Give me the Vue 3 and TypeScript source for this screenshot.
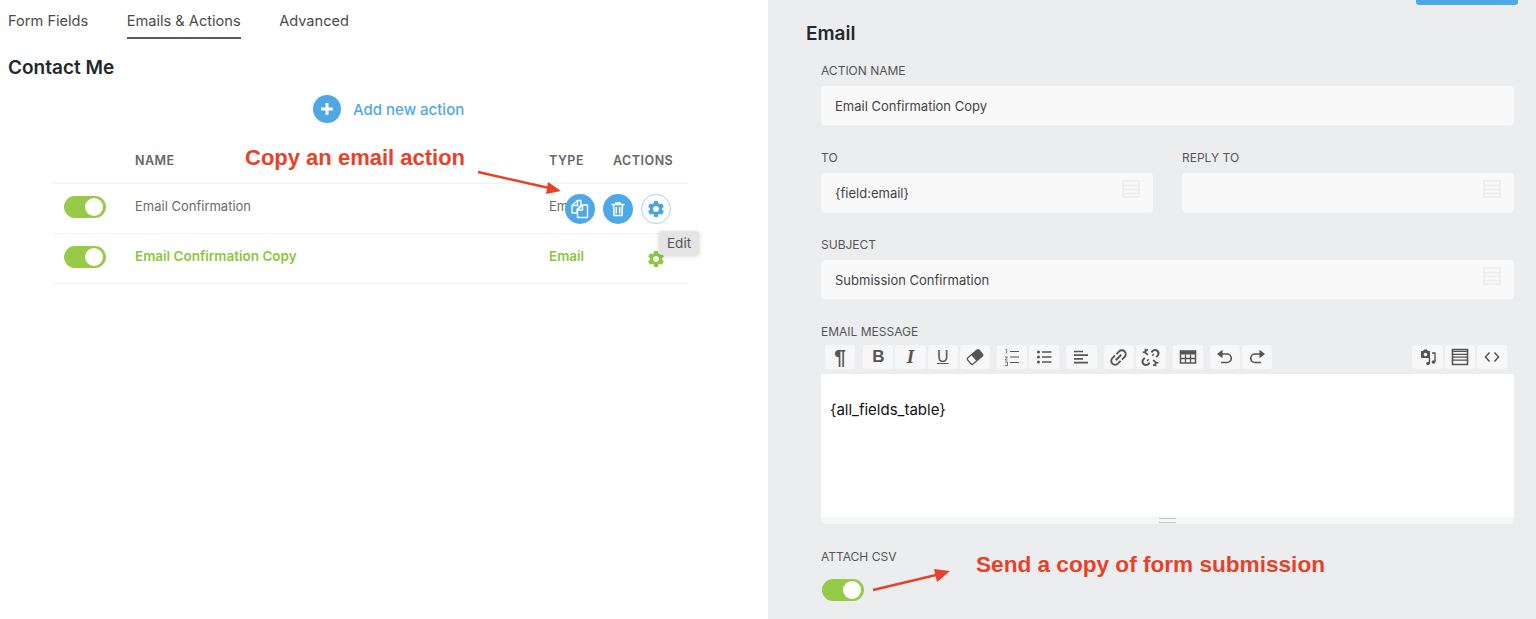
<script setup lang="ts">
const tabs = ['Form Fields', 'Emails & Actions', 'Advanced']
const gear =
  'M19.14 12.94c.04-.3.06-.61.06-.94 0-.32-.02-.64-.07-.94l2.03-1.58a.49.49 0 0 0 .12-.61l-1.92-3.32a.488.488 0 0 0-.59-.22l-2.39.96c-.5-.38-1.03-.7-1.62-.94l-.36-2.54a.484.484 0 0 0-.48-.41h-3.84c-.24 0-.43.17-.47.41l-.36 2.54c-.59.24-1.13.57-1.62.94l-2.39-.96c-.22-.08-.47 0-.59.22L2.74 8.87c-.12.21-.08.47.12.61l2.03 1.58c-.05.3-.09.63-.09.94s.02.64.07.94l-2.03 1.58a.49.49 0 0 0-.12.61l1.92 3.32c.12.22.37.29.59.22l2.39-.96c.5.38 1.03.7 1.62.94l.36 2.54c.05.24.24.41.48.41h3.84c.24 0 .44-.17.47-.41l.36-2.54c.59-.24 1.13-.56 1.62-.94l2.39.96c.22.08.47 0 .59-.22l1.92-3.32c.12-.22.07-.47-.12-.61l-2.01-1.58zM12 15.6c-1.98 0-3.6-1.62-3.6-3.6s1.62-3.6 3.6-3.6 3.6 1.62 3.6 3.6-1.62 3.6-3.6 3.6z'
const link =
  'M3.9 12c0-1.71 1.39-3.1 3.1-3.1h4V7H7c-2.76 0-5 2.24-5 5s2.24 5 5 5h4v-1.9H7c-1.71 0-3.1-1.39-3.1-3.1zM8 13h8v-2H8v2zm9-6h-4v1.9h4c1.71 0 3.1 1.39 3.1 3.1s-1.39 3.1-3.1 3.1h-4V17h4c2.76 0 5-2.24 5-5s-2.24-5-5-5z'
</script>

<template>
  <div class="page">
    <!-- Left pane: actions list -->
    <section class="left">
      <nav class="tabs">
        <a v-for="(t, i) in tabs" :key="t" class="tab" :class="{ active: i === 1 }">{{ t }}</a>
      </nav>
      <h2 class="form-title">Contact Me</h2>
      <div class="add-row">
        <span class="add-circle">
          <svg width="12" height="12" viewBox="0 0 12 12"><path d="M6 1v10M1 6h10" stroke="#fff" stroke-width="3" stroke-linecap="round" /></svg>
        </span>
        <span class="add-text">Add new action</span>
      </div>

      <div class="table">
        <div class="tr head">
          <span></span>
          <span>NAME</span>
          <span>TYPE</span>
          <span>ACTIONS</span>
        </div>
        <div class="tr">
          <span class="toggle"><i></i></span>
          <span class="name">Email Confirmation</span>
          <span class="name">Email</span>
          <span></span>
          <div class="hover-actions">
            <span class="round solid">
              <svg width="24" height="24" viewBox="0 0 24 24" fill="none" stroke="#fff" stroke-width="1.4" stroke-linejoin="round">
                <path d="M9.500 3.500h3.500v4.500L9 12.500v3.500H4V8.500z" />
                <path d="M9.500 3.500v5h-5" />
                <path d="M14.500 8h5v12.500H9.500V13z" />
                <path d="M14.500 8v5h-5" />
              </svg>
            </span>
            <span class="round solid">
              <svg width="18" height="18" viewBox="0 0 18 18" fill="none" stroke="#fff" stroke-width="1.600" stroke-linecap="round">
                <path d="M3 4.500h12M7 4.500V2.800h4v1.700M4.500 4.500l.6 11h7.800l.6-11M7.300 7.500v5.500M10.700 7.500v5.500" />
              </svg>
            </span>
            <span class="round outline">
              <svg width="20" height="20" viewBox="0 0 24 24"><path :d="gear" fill="#4aa5e4" /></svg>
            </span>
          </div>
        </div>
        <div class="tr copy">
          <span class="toggle"><i></i></span>
          <span class="name">Email Confirmation Copy</span>
          <span class="name">Email</span>
          <span class="gear-cell">
            <svg width="20" height="20" viewBox="0 0 24 24"><path :d="gear" fill="#8cc63f" /></svg>
          </span>
          <span class="tooltip">Edit</span>
        </div>
      </div>

      <span class="note note-copy">Copy an email action</span>
      <svg class="arrow arrow-copy" width="90" height="26" viewBox="0 0 90 26">
        <path d="M1 2L72 18" stroke="#e8412a" stroke-width="2.500" />
        <path d="M84 21L69 24L71 12z" fill="#e8412a" />
      </svg>
    </section>

    <!-- Right pane: email action form -->
    <section class="right">
      <div class="save-btn"></div>
      <h2 class="panel-title">Email</h2>
      <div class="fields">
        <div class="field">
          <label>ACTION NAME</label>
          <div class="input">Email Confirmation Copy</div>
        </div>
        <div class="two">
          <div class="field">
            <label>TO</label>
            <div class="input">
              {field:email}
              <svg class="merge" width="18" height="18" viewBox="0 0 18 18"><path d="M1 1h16v16H1zM1 5.500h16M1 9.500h16M1 13.500h16" fill="none" stroke="#ececec" stroke-width="1.500" /></svg>
            </div>
          </div>
          <div class="field">
            <label>REPLY TO</label>
            <div class="input">
              <svg class="merge" width="18" height="18" viewBox="0 0 18 18"><path d="M1 1h16v16H1zM1 5.500h16M1 9.500h16M1 13.500h16" fill="none" stroke="#ececec" stroke-width="1.500" /></svg>
            </div>
          </div>
        </div>
        <div class="field">
          <label>SUBJECT</label>
          <div class="input">
            Submission Confirmation
            <svg class="merge" width="18" height="18" viewBox="0 0 18 18"><path d="M1 1h16v16H1zM1 5.500h16M1 9.500h16M1 13.500h16" fill="none" stroke="#ececec" stroke-width="1.500" /></svg>
          </div>
        </div>
        <div class="field">
          <label class="editor-label">EMAIL MESSAGE</label>
          <div class="toolbar">
            <span class="tb para">¶</span>
            <span class="tb gap first b">B</span>
            <span class="tb i">I</span>
            <span class="tb u">U</span>
            <span class="tb">
              <svg width="18" height="18" viewBox="0 0 18 18"><g transform="rotate(-40 9 9)"><rect x="1.500" y="5" width="15" height="8" rx="1.500" fill="none" stroke="#555" stroke-width="1.300" /><path d="M7.500 5H15A1.500 1.500 0 0 1 16.500 6.500V11.500A1.500 1.500 0 0 1 15 13H7.500z" fill="#555" /></g></svg>
            </span>
            <span class="tb gap">
              <svg width="18" height="18" viewBox="0 0 18 18"><path d="M7 3.500h9M7 9h9M7 14.500h9" stroke="#555" stroke-width="1.200" /><path d="M2.500 1.500h1.200v4M2 9h2.500L2 12h2.600M2 14h2.500v3.500H2" fill="none" stroke="#555" stroke-width=".8" /></svg>
            </span>
            <span class="tb">
              <svg width="18" height="18" viewBox="0 0 18 18"><circle cx="3.500" cy="4" r="1.500" fill="#555" /><circle cx="3.500" cy="9" r="1.500" fill="#555" /><circle cx="3.500" cy="14" r="1.500" fill="#555" /><path d="M7 4h9.500M7 9h9.500M7 14h9.500" stroke="#555" stroke-width="1.400" /></svg>
            </span>
            <span class="tb gap">
              <svg width="18" height="18" viewBox="0 0 18 18"><path d="M2 3.500h9M2 7.200h14M2 10.900h9M2 14.600h14" stroke="#555" stroke-width="1.700" /></svg>
            </span>
            <span class="tb gap">
              <svg width="23" height="23" viewBox="0 0 24 24"><path :d="link" fill="#555" transform="rotate(-45 12 12)" /></svg>
            </span>
            <span class="tb">
              <svg width="21" height="21" viewBox="0 0 24 24" fill="none" stroke="#555" stroke-width="2.200">
                <path d="M13 6l2-2a4 4 0 0 1 5.500 5.500l-2 2M11 18l-2 2a4 4 0 0 1-5.500-5.500l2-2M9 9L6 6.500a2.500 2.500 0 0 1 3-3M15 15l3 2.500a2.500 2.500 0 0 1-3 3" />
                <path d="M3 6h3M6 2v2M18 22v-2M21 18h-3M16 8l-2 2M8 16l2-2" stroke-width="1.500" />
              </svg>
            </span>
            <span class="tb gap">
              <svg width="18" height="18" viewBox="0 0 18 18"><path d="M1.500 3h15v12h-15z" fill="none" stroke="#555" stroke-width="1.500" /><path d="M1.500 3h15v3.500h-15z" fill="#555" /><path d="M1.500 10.500h15M6.500 6.500v8.500M11.500 6.500v8.500" stroke="#555" stroke-width="1.300" /></svg>
            </span>
            <span class="tb gap">
              <svg width="18" height="18" viewBox="0 0 18 18" fill="none"><path d="M3 6h8a4 4 0 0 1 0 8.500H5" stroke="#555" stroke-width="1.700" /><path d="M6.500 1.800v8.400L1 6z" fill="#555" /></svg>
            </span>
            <span class="tb">
              <svg width="18" height="18" viewBox="0 0 18 18" fill="none"><path d="M15 6H7a4 4 0 0 0 0 8.500h6" stroke="#555" stroke-width="1.700" /><path d="M11.500 1.800v8.400L17 6z" fill="#555" /></svg>
            </span>
            <span class="tb push">
              <svg width="20" height="20" viewBox="0 0 20 20"><path d="M3 4h2l1-1.500h3L10 4h2v7H3z" fill="#555" /><circle cx="7.500" cy="7.500" r="1.700" fill="#f9f9f9" /><circle cx="10" cy="16.500" r="1.800" fill="#555" /><circle cx="15.500" cy="15" r="1.800" fill="#555" /><path d="M11.500 16.500V11M17 15V6h-3" fill="none" stroke="#555" stroke-width="1.400" /></svg>
            </span>
            <span class="tb">
              <svg width="18" height="18" viewBox="0 0 18 18"><path d="M1.500 1.500h15v15h-15z" fill="none" stroke="#555" stroke-width="1.600" /><path d="M1.500 6.300h15M1.500 9.200h15M1.500 12.100h15M1.500 3.400h15" stroke="#555" stroke-width="1.300" /></svg>
            </span>
            <span class="tb">
              <svg width="16" height="16" viewBox="0 0 16 16" fill="none"><path d="M5.500 3.500L1.500 8l4 4.500M10.500 3.500l4 4.500-4 4.500" stroke="#555" stroke-width="1.500" /></svg>
            </span>
          </div>
          <div class="editor">{all_fields_table}</div>
          <div class="resize"><i></i></div>
        </div>
        <div class="field csv">
          <label class="csv-label">ATTACH CSV</label>
          <span class="toggle"><i></i></span>
        </div>
      </div>

      <span class="note note-csv">Send a copy of form submission</span>
      <svg class="arrow arrow-csv" width="82" height="24" viewBox="0 0 82 24">
        <path d="M1 22L64 7" stroke="#e8412a" stroke-width="2.500" />
        <path d="M78 3L65 14L62 1z" fill="#e8412a" />
      </svg>
    </section>
  </div>
</template>

<style scoped>
.page {
  display: flex;
  height: 619px;
  overflow: hidden;
  font-family: Inter, "Open Sans", sans-serif;
  color: #444;
}

.left {
  position: relative;
  width: 768px;
  background: #fff;
}

.tabs {
  display: flex;
  gap: 38.500px;
  padding: 12px 0 0 8px;
}

.tab {
  padding-bottom: 6px;
  border-bottom: 2px solid transparent;
  font-size: 14.600px;
  line-height: 19px;
  color: #4a4a4a;
}

.tab.active {
  border-bottom-color: #5b5b5b;
}

.form-title {
  margin: 17px 0 0 8px;
  font-size: 19px;
  line-height: 24px;
  font-weight: 600;
  color: #23282d;
}

.add-row {
  display: flex;
  align-items: center;
  gap: 12px;
  margin: 15px 0 0 313px;
}

.add-circle {
  display: flex;
  align-items: center;
  justify-content: center;
  width: 28px;
  height: 28px;
  border-radius: 50%;
  background: #4ea8e6;
}

.add-text {
  font-size: 15px;
  font-weight: 500;
  color: #4ea8e6;
}

.table {
  margin: 15px 0 0 53px;
  width: 635px;
}

.tr {
  position: relative;
  display: grid;
  grid-template-columns: 82px 414px 64px 75px;
  align-items: center;
  height: 50px;
  padding-bottom: 3px;
  box-sizing: border-box;
  border-bottom: 1px solid #f2f2f2;
}

.head {
  height: 46px;
  padding-bottom: 0;
  font-size: 12.500px;
  font-weight: 600;
  letter-spacing: 0.5px;
  color: #666;
}

.name {
  margin-bottom: 2px;
  font-size: 13px;
  color: #6b6b6b;
}

.copy .name {
  font-size: 13.500px;
  font-weight: 600;
  color: #8cc63f;
}

.toggle {
  display: flex;
  align-items: center;
  justify-content: flex-end;
  width: 42px;
  height: 22px;
  margin-left: 11px;
  padding-right: 3px;
  box-sizing: border-box;
  border-radius: 11px;
  background: #96ca47;
}

.toggle i {
  width: 18px;
  height: 18px;
  border-radius: 50%;
  background: #fff;
}

.hover-actions {
  position: absolute;
  left: 512px;
  top: 10px;
  display: flex;
  gap: 8px;
}

.round {
  display: flex;
  align-items: center;
  justify-content: center;
  width: 30px;
  height: 30px;
  border-radius: 50%;
  box-sizing: border-box;
}

.solid {
  background: #4ea8e6;
}

.outline {
  background: #fff;
  border: 1px solid #a5d3f2;
}

.gear-cell {
  display: flex;
  padding: 3px 0 0 33px;
}

.tooltip {
  position: absolute;
  left: 606px;
  top: -3px;
  padding: 4px 8px;
  border-radius: 3px;
  background: #e4e4e4;
  box-shadow: 0 1px 4px rgba(0, 0, 0, 0.18);
  font-size: 13.500px;
  line-height: 16px;
  color: #555;
}

.note {
  position: absolute;
  font-family: "Liberation Sans", Arial, sans-serif;
  font-weight: 700;
  color: #e8412a;
  white-space: nowrap;
}

.note-copy {
  left: 245px;
  top: 144px;
  font-size: 22px;
  line-height: 28px;
}

.arrow {
  position: absolute;
}

.arrow-copy {
  left: 477px;
  top: 170px;
}

.right {
  position: relative;
  flex: 1;
  padding-left: 38px;
  box-sizing: border-box;
  background: #ecedef;
}

.save-btn {
  position: absolute;
  right: 18px;
  top: 0;
  width: 102px;
  height: 5px;
  border-radius: 0 0 3px 3px;
  background: #4ea8e6;
}

.panel-title {
  margin: 0;
  padding-top: 22px;
  font-size: 19px;
  line-height: 24px;
  font-weight: 600;
  color: #23282d;
}

.fields {
  display: flex;
  flex-direction: column;
  gap: 25px;
  width: 693px;
  margin: 17px 0 0 15px;
}

.two {
  display: grid;
  grid-template-columns: 332px 332px;
  gap: 29px;
}

.field {
  position: relative;
}

label {
  display: block;
  margin-bottom: 7px;
  font-size: 12px;
  line-height: 16px;
  color: #555;
}

.input {
  position: relative;
  display: flex;
  align-items: center;
  height: 39px;
  padding-left: 14px;
  border-radius: 4px;
  background: #f9f9f9;
  box-shadow: 0 1px 0 #f2f2f2;
  font-size: 13px;
  color: #444;
}

.merge {
  position: absolute;
  right: 13px;
  top: 7px;
}

.editor-label {
  margin-bottom: 5px;
}

.toolbar {
  display: flex;
  gap: 2px;
  height: 24px;
  padding: 0 7px 0 4px;
}

.tb {
  display: flex;
  align-items: center;
  justify-content: center;
  width: 30.200px;
  height: 24px;
  border-radius: 3px;
  background: #f7f7f7;
  font-family: "Liberation Serif", serif;
  font-size: 17px;
  color: #555;
}

.tb.gap {
  margin-left: 5px;
}

.tb.first {
  margin-left: 6px;
}

.tb.push {
  margin-left: auto;
}

.para {
  font-family: "Liberation Sans", sans-serif;
  font-size: 21px;
  font-weight: 700;
}

.b {
  font-family: "Liberation Sans", sans-serif;
  font-weight: 700;
}

.i {
  font-style: italic;
  font-weight: 700;
  font-size: 19px;
}

.u {
  font-family: "Liberation Sans", sans-serif;
  font-size: 16px;
  text-decoration: underline;
}

.editor {
  height: 143px;
  margin-top: 5px;
  padding: 26px 0 0 9px;
  box-sizing: border-box;
  background: #fff;
  font-size: 15px;
  line-height: 20px;
  color: #111;
}

.resize {
  display: flex;
  justify-content: center;
  align-items: center;
  height: 7px;
  border-radius: 0 0 4px 4px;
  background: #f5f6f6;
}

.resize i {
  width: 17px;
  height: 3px;
  border-top: 1px solid #c4c4c4;
  border-bottom: 1px solid #c4c4c4;
}

.csv-label {
  margin-bottom: 14px;
}

.csv .toggle {
  margin-left: 1px;
}

.note-csv {
  left: 208px;
  top: 551px;
  font-size: 22.600px;
  line-height: 28px;
}

.arrow-csv {
  left: 104px;
  top: 568px;
}
</style>

<style>
html,
body {
  margin: 0;
}
</style>
